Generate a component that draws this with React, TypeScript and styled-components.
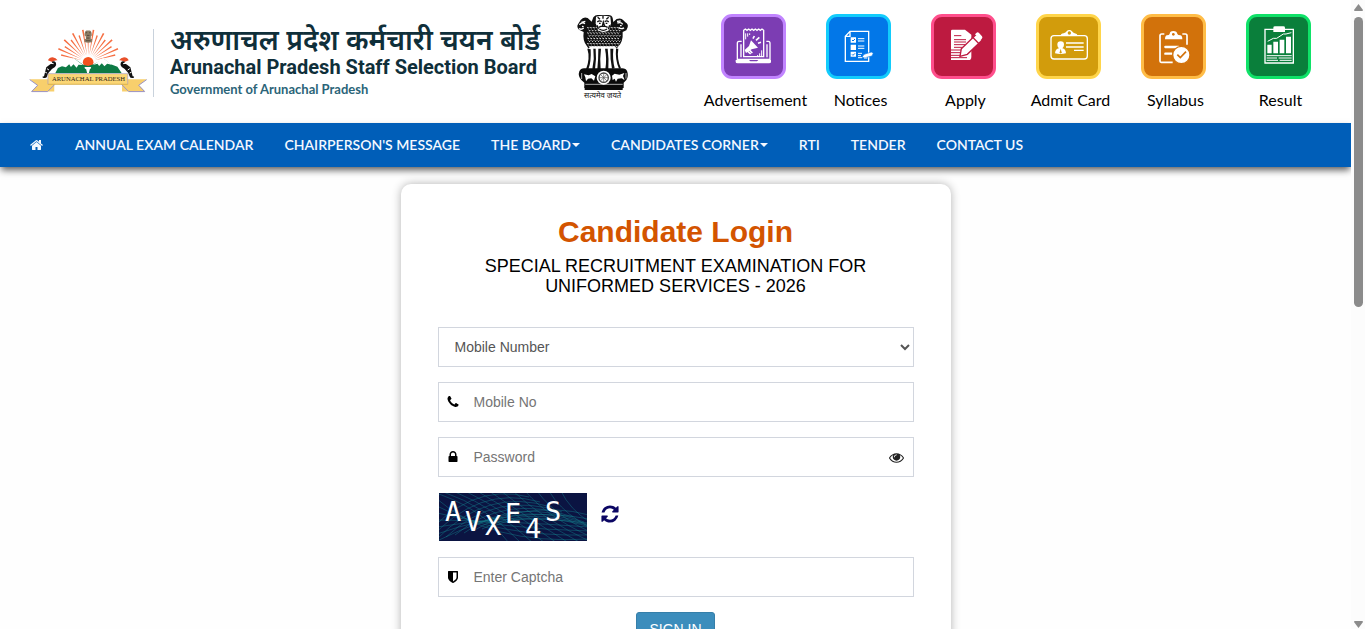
import React from 'react';
import styled, { createGlobalStyle } from 'styled-components';

const GlobalStyle = createGlobalStyle`
  *, *::before, *::after { box-sizing: border-box; }
  body {
    margin: 0;
    background: #fefefe;
    color: #000;
    font-family: "Liberation Sans", Arial, sans-serif;
    font-size: 14px;
  }
`;

/* ---------- page frame ---------- */

const Frame = styled.div`
  display: grid;
  grid-template-columns: minmax(0, 1fr) 14px;
  height: 100vh;
`;

const Viewport = styled.div`
  overflow-x: hidden;
  overflow-y: auto;
  scrollbar-width: none;
`;

const Scrollbar = styled.div`
  display: flex;
  flex-direction: column;
  align-items: center;
  padding: 4px 0 1px;
  background: #fcfcfc;
`;

const ScrollArrow = styled.svg`
  display: block;
  width: 9px;
  height: 7px;
  fill: #8b8b8b;
`;

const ScrollTrack = styled.div`
  flex: 1;
  padding-top: 6px;
`;

const ScrollThumb = styled.div`
  width: 9px;
  height: 48%;
  border-radius: 5px;
  background: #8b8b8b;
`;

/* ---------- header ---------- */

const Header = styled.header`
  display: flex;
  justify-content: space-between;
  padding: 14px 18px 0 28px;
  height: 123px;
  background: #fff;
`;

const Brand = styled.a`
  display: flex;
  align-items: flex-start;
  color: #0f2f3a;
  text-decoration: none;
`;

const StateLogo = styled.svg`
  width: 121px;
  height: 66px;
  margin-top: 14px;
  margin-right: 4px;
`;

const BrandText = styled.div`
  display: flex;
  flex-direction: column;
  min-width: 390px;
  height: 68px;
  margin-top: 15px;
  margin-right: 31px;
  padding-left: 16px;
  border-left: 1px solid #c9d2dc;
  white-space: nowrap;
`;

const HindiName = styled.span`
  height: 28px;
  line-height: 20px;
  font-family: "Noto Sans", sans-serif;
  font-size: 28px;
  font-weight: 600;
`;

const EnglishName = styled.span`
  height: 24px;
  line-height: 20px;
  font-family: Roboto, sans-serif;
  font-size: 20px;
  font-weight: 700;
`;

const GovName = styled.span`
  line-height: 16px;
  font-family: Lato, sans-serif;
  font-size: 13px;
  font-weight: 700;
  color: #2b6478;
`;

const Emblem = styled.svg`
  width: 57px;
  height: 86px;
`;

const QuickLinks = styled.nav`
  display: grid;
  grid-template-columns: repeat(6, 105px);
`;

const QuickLink = styled.a`
  display: flex;
  flex-direction: column;
  align-items: center;
  color: #000;
  font-family: Lato, sans-serif;
  font-size: 16px;
  line-height: 20px;
  text-decoration: none;
  white-space: nowrap;
`;

const Tile = styled.span<{ $fill: string; $edge: string }>`
  display: block;
  width: 65px;
  height: 65px;
  margin: 0 4px 11px 0;
  border: 3px solid ${(p) => p.$edge};
  border-radius: 11px;
  background: ${(p) => p.$fill};
`;

const TileArt = styled.svg`
  display: block;
  width: 59px;
  height: 59px;
`;

/* ---------- navigation ---------- */

const NavBar = styled.nav`
  position: relative;
  height: 44px;
  background: #005eb8;
  box-shadow: 0 4px 7px -1px rgba(0, 0, 0, 0.65);
`;

const NavList = styled.ul`
  display: flex;
  margin: 0;
  padding: 0 15px;
  list-style: none;
`;

const NavLink = styled.a`
  display: flex;
  align-items: center;
  gap: 1px;
  height: 43px;
  padding: 0 16px 0 15px;
  color: #f3f8ff;
  font-family: Lato, sans-serif;
  font-size: 14px;
  font-weight: 600;
  text-decoration: none;
  white-space: nowrap;
`;

const Caret = styled.span`
  border-top: 4px solid currentColor;
  border-right: 4px solid transparent;
  border-left: 4px solid transparent;
`;

const Glyph = styled.svg<{ $size: number }>`
  display: block;
  flex: none;
  width: ${(p) => p.$size}px;
  height: ${(p) => p.$size}px;
  fill: currentColor;
`;

/* ---------- login card ---------- */

const Main = styled.main`
  display: flex;
  justify-content: center;
  padding: 17px 16px 40px;
`;

const Card = styled.form`
  display: flex;
  flex-direction: column;
  gap: 15px;
  width: 100%;
  max-width: 550px;
  padding: 30px 37px;
  border-radius: 10px;
  background: #fff;
  box-shadow: 0 0 10px rgba(0, 0, 0, 0.3);
`;

const Heading = styled.div`
  margin-bottom: 16px;
  text-align: center;
`;

const Title = styled.h1`
  margin: 0 0 6px;
  color: #d35400;
  font-size: 30px;
  line-height: 36px;
`;

const Subtitle = styled.h2`
  margin: 0;
  font-size: 18px;
  font-weight: 400;
  line-height: 20px;
`;

const Select = styled.select`
  width: 100%;
  height: 40px;
  padding: 6px 12px;
  border: 1px solid #d2d6de;
  border-radius: 0;
  background-color: #fff;
  color: #555;
  font: inherit;
`;

const Field = styled.label`
  display: flex;
  align-items: center;
  height: 40px;
  padding: 0 9px 0 7px;
  border: 1px solid #d2d6de;
  background: #fff;
`;

const FieldInput = styled.input`
  flex: 1;
  min-width: 0;
  margin-left: 14px;
  padding: 0;
  border: 0;
  outline: 0;
  background: none;
  color: #555;
  font: inherit;

  &::placeholder { color: #757575; }
`;

const IconButton = styled.button<{ $color: string }>`
  padding: 0;
  border: 0;
  background: none;
  color: ${(p) => p.$color};
  cursor: pointer;
`;

const CaptchaRow = styled.div`
  display: flex;
  align-items: center;
  gap: 13px;
  height: 50px;
  padding-left: 1px;

  ${IconButton} { margin-bottom: 7px; }
`;

const CaptchaArt = styled.svg`
  display: block;
  width: 148px;
  height: 48px;
  background: #0b1442;
  font-family: "DejaVu Sans Mono", monospace;
  font-size: 27px;
`;

const SignIn = styled.button`
  align-self: center;
  height: 34px;
  padding: 6px 12px;
  border: 1px solid #367fa9;
  border-radius: 3px;
  background: #3c8dbc;
  color: #fff;
  font: inherit;
`;

/* ---------- glyph data ---------- */

const glyphs = {
  home: 'M1408 992v480q0 26-19 45t-45 19h-384v-384h-256v384h-384q-26 0-45-19t-19-45v-480q0-1 .5-3t.5-3l575-474 575 474q1 2 1 6zm223-69l-62 74q-8 9-21 11h-3q-13 0-21-7l-692-577-692 577q-12 8-24 7-13-2-21-11l-62-74q-8-10-7-23.5t11-21.5l719-599q32-26 76-26t76 26l244 204v-195q0-14 9-23t23-9h192q14 0 23 9t9 23v408l219 182q10 8 11 21.5t-7 23.5z',
  phone: 'M1600 1240q0 27-10 70.5t-21 68.5q-21 50-122 106-94 51-186 51-27 0-53-3.5t-57.5-12.5-47-14.5-55.5-20.5-49-18q-98-35-175-83-127-79-264-216t-216-264q-48-77-83-175-3-9-18-49t-20.5-55.5-14.5-47-12.5-57.5-3.5-53q0-92 51-186 56-101 106-122 25-11 68.5-21t70.5-10q14 0 21 3 18 6 53 76 11 19 30 54t35 63.5 31 53.5q3 4 17.5 25t21.5 35.5 7 28.5q0 20-28.5 50t-62 55-62 53-28.5 46q0 9 5 22.5t8.5 20.5 14 24 11.5 19q76 137 174 235t235 174q2 1 19 11.5t24 14 20.5 8.5 22.5 5q18 0 46-28.5t53-62 55-62 50-28.5q14 0 28.5 7t35.5 21.5 25 17.5q25 15 53.5 31t63.5 35 54 30q70 35 76 53 3 7 3 21z',
  lock: 'M640 768h512v-192q0-106-75-181t-181-75-181 75-75 181v192zm832 96v576q0 40-28 68t-68 28h-960q-40 0-68-28t-28-68v-576q0-40 28-68t68-28h32v-192q0-184 132-316t316-132 316 132 132 316v192h32q40 0 68 28t28 68z',
  shield: 'M1344 960v-640h-448v1137q119-63 213-137 235-184 235-360zm192-768v768q0 86-33.5 170.5t-83 150-118 127.5-126.5 103-121 77.5-89.5 49.5-42.5 20q-12 6-26 6t-26-6q-16-7-42.5-20t-89.5-49.5-121-77.5-126.5-103-118-127.5-83-150-33.5-170.5v-768q0-26 19-45t45-19h1152q26 0 45 19t19 45z',
  eye: 'M1664 960q-152-236-381-353 61 104 61 225 0 185-131.5 316.5t-316.5 131.5-316.5-131.5-131.5-316.5q0-121 61-225-229 117-381 353 133 205 333.5 326.5t434.5 121.5 434.5-121.5 333.5-326.5zm-720-384q0-20-14-34t-34-14q-125 0-214.5 89.5t-89.5 214.5q0 20 14 34t34 14 34-14 14-34q0-86 61-147t147-61q20 0 34-14t14-34zm848 384q0 34-20 69-140 230-376.5 368.5t-499.5 138.5-499.5-139-376.5-368q-20-35-20-69t20-69q140-229 376.5-368t499.5-139 499.5 139 376.5 368q20 35 20 69z',
  refresh: 'M1639 1056q0 5-1 7-64 268-268 434.5t-478 166.5q-146 0-282.5-55t-243.5-157l-129 129q-19 19-45 19t-45-19-19-45v-448q0-26 19-45t45-19h448q26 0 45 19t19 45-19 45l-137 137q71 66 161 102t187 36q134 0 250-65t186-179q11-17 53-117 8-23 30-23h192q13 0 22.5 9.5t9.5 22.5zm25-800v448q0 26-19 45t-45 19h-448q-26 0-45-19t-19-45 19-45l138-138q-148-137-349-137-134 0-250 65t-186 179q-11 17-53 117-8 23-30 23h-199q-13 0-22.5-9.5t-9.5-22.5v-7q65-268 270-434.5t480-166.5q146 0 284 55.5t245 156.5l130-129q19-19 45-19t45 19 19 45z',
};

const Icon = ({ name, size }: { name: keyof typeof glyphs; size: number }) => (
  <Glyph $size={size} viewBox="0 0 1792 1792" aria-hidden="true">
    <path d={glyphs[name]} />
  </Glyph>
);

/* ---------- drawings ---------- */

const rays = Array.from({ length: 17 }, (_, i) => {
  const angle = Math.PI * (0.08 + (i * 0.84) / 16);
  const outer = i % 2 ? 98 : 84;
  const at = (r: number, a: number) => `${205 - r * Math.cos(a)} ${156 - r * Math.sin(a)}`;
  return `M${at(20, angle)}L${at(outer, angle - 0.026)}L${at(outer, angle + 0.026)}Z`;
}).join('');

const Hornbill = () => (
  <g>
    <path d="M84 151q4-9 14-9 10 1 15 9-9-1-16 5z" fill="#e8502a" />
    <path d="M96 155q8-3 12 3 3 8-3 13l-9 6-10 11-6 14-6 2-6 0 4-4 4-16 3-12 10-8 8-5z" fill="#111" />
    <path d="M92 160l9 1M81 176l6 4M76 187l5 2" stroke="#fff" strokeWidth="3" fill="none" />
    <path d="M68 201l11 0" stroke="#111" strokeWidth="3" />
  </g>
);

const StateLogoArt = () => (
  <StateLogo viewBox="24 54 364 198" role="img" aria-label="Arunachal Pradesh state emblem">
    <path d={rays} fill="#f66f43" />
    <circle cx="205" cy="157" r="16" fill="#f4511e" />
    <path d="M194 76q0-14 6-15h10q6 1 6 15l-3 3v8h4v9q-12 4-23 0v-9h4v-8z" fill="#8d7c64" />
    <path d="M198 68h4M208 68h4M201 76h8M200 84h9M198 92h14" stroke="#40342a" strokeWidth="2" />
    <path d="M106 190l8-16 22-10 28-18 26 18 15 4 16-5 32-16 18 15 22 8 13 20z" fill="#0d7a45" />
    <path d="M124 168l38-23 27 20-13-1-6 9-9-10-8 8-5-8-10 9z M220 165l30-21 26 20-14-3-8 8-8-9-8 8-5-7z" fill="#fff" />
    <path d="M194 171h20q0 6-4 7l-3 12h-5l-3-12q-5-2-5-7z" fill="#fff" />
    <Hornbill />
    <g transform="translate(411 0) scale(-1 1)"><Hornbill /></g>
    <path d="M29 208h74v37H34l18-19z M381 208h-74v37h69l-18-19z" fill="#f8cf6c" />
    <path d="M29 209l24 17-18 19h48l22-22M381 209l-24 17 18 19h-48l-22-22" fill="none" stroke="#9a93c4" strokeWidth="3" />
    <path d="M84 191h240v33H84z" fill="#fbd675" />
    <path d="M84 223V191h240v32" fill="none" stroke="#a79cc6" strokeWidth="2" />
    <path d="M84 223h240" stroke="#c99f35" strokeWidth="2" />
    <text x="206" y="214" textAnchor="middle" fontFamily="Liberation Serif, serif" fontSize="20" fill="#2e2415">
      ARUNACHAL PRADESH
    </text>
  </StateLogo>
);

const maneRows = Array.from({ length: 9 }, (_, r) =>
  Array.from({ length: 11 }, (_, c) => `M${70 + c * 9 + (r % 2) * 4} ${66 + r * 8}q3 5 5 0`).join(''),
).join('');

const EmblemArt = () => (
  <Emblem viewBox="30 26 171 258" role="img" aria-label="State Emblem of India">
    <path d="M88 36q6-8 15-7h30q11 0 13 9l2 12 10-9q14-5 20 4l6 6q10 6 7 15l-4 9-11 5q2 30-14 44l-5 8H75l-6-9q-14-16-10-43l-14-7q-8-8-3-16l8-13q8-11 21-6l12 11z" fill="#111" />
    <path d={maneRows} fill="none" stroke="#fff" strokeWidth="3" />
    <path d="M96 34q22-5 43 0l2 20-6 20q-17 12-33 0l-7-20z" fill="#fff" />
    <path d="M101 36l7 6M134 36l-7 6M117 31v9M100 50q6-6 13-1M122 49q7-5 12 1M105 54h5M125 54h5M118 50l-3 13h7z M104 66q13-7 27 0M106 71q12 8 23 0M99 60l4 12M137 60l-4 12" fill="none" stroke="#111" strokeWidth="4" />
    <path d="M46 58q8-9 17-3M45 70q8 4 14-2M52 51l12-3M160 53q12-4 16 4M164 67q9 6 16 0M159 48l11-1M54 63l5 1M168 61h5" fill="none" stroke="#fff" strokeWidth="4" />
    <path d="M73 132l6-9 74 0 6 9-2 27 7 20-9 15-75-1-10-13 6-22z" fill="#fff" />
    <path d="M70 130q9 28-4 62h7q9-22 7-60z M88 130q4 30-3 60l8 2q5-30 2-62z M103 130q0 32-3 62h10q-3-30 1-62z M123 130q6 30 1 62h9q2-32-2-62z M139 130q-1 32 5 60l8-1q-7-28-4-59z M156 130q-3 34 9 60l6-1q-13-28-8-59z" fill="#111" />
    <path d="M46 198q4-9 14-9h114q12 0 16 10 4 14-3 25l-8 8v16q-62 10-118 0v-16l-9-8q-11-12-6-26z" fill="#0b0b0b" />
    <path d="M60 207l14 3 9-4 11 7-4 13-8-7-10 1-6 8-2-12z M144 211l8-6 14 3 15-5-4 9 5 12-9-5-12 1-5 9-4-9-6 4z" fill="#fff" />
    <path d="M53 203v18M186 203v17M64 237h112" stroke="#fff" strokeWidth="2" />
    <circle cx="119" cy="217" r="21" fill="#fff" />
    <circle cx="119" cy="217" r="14" fill="none" stroke="#444" strokeWidth="4" />
    <path d="M119 203v28M105 217h28M109 207l20 20M129 207l-20 20" stroke="#555" strokeWidth="2" />
    <path d="M62 243h114v11H62z" fill="#0b0b0b" />
    <text x="116" y="279" textAnchor="middle" fontFamily="Noto Sans, sans-serif" fontSize="23" fill="#111">
      सत्यमेव जयते
    </text>
  </Emblem>
);

const AdvertisementArt = () => (
  <g fill="none" stroke="#fff" strokeWidth="4">
    <path d="M68 128V49l5-4 5 4 5-4 5 4 5-4 5 4 5-4 5 4 5-4 5 4 5-4 5 4v79z" />
    <path d="M62 82h-8q-5 0-5 6v48h98V88q0-6-5-6h-6M60 130V91M138 130V91" />
    <path d="M44 138h40l4 4h20l4-4h38v6q0 4-6 4H50q-6 0-6-4z" fill="#fff" stroke="none" />
    <path d="M74 58v18M80 58v10M86 58v5M116 128v-10M122 128v-19M110 128v-5" strokeWidth="3" />
    <path d="M90 79l21 22-19 5-17 11-4-9 13-12z" fill="#fff" stroke="none" />
    <path d="M79 111l10 9M84 107l10 10M96 74l4-8M105 79l10-9M111 88l9-3" strokeWidth="5" />
  </g>
);

const NoticesArt = () => (
  <g fill="none" stroke="#fff" strokeWidth="4">
    <path d="M72 52h56v90H58V67z M58 67h14V52" />
    <path d="M74 70h16v16H74z M74 92h16v16H74z M74 113h16v15H74z" fill="#fff" stroke="none" />
    <path d="M78 78l3 3 6-6M78 121l3 3 6-6" stroke="#0277e8" strokeWidth="3" />
    <path d="M96 74h19M96 81h19M96 96h19M96 103h19M96 118h12M96 125h9" strokeWidth="3" />
    <path d="M107 131l7-10 22-7 6 4-4 8-20 5z" fill="#fff" stroke="#0277e8" strokeWidth="2" />
    <path d="M96 131h12M114 132h10" strokeWidth="3" />
  </g>
);

const ApplyArt = () => (
  <g>
    <path d="M64 47h38l19 15v66q0 10-8 10H60V51q0-4 4-4z" fill="#fff" />
    <path d="M69 65h22M69 77h36M69 84h36M69 92h33M69 100h26M60 108h34M60 116h28M60 124h28M60 131h48" stroke="#bd1a40" strokeWidth="3" />
    <path d="M91 104l42-40q4-3 8 1l9 10q3 4 0 7l-41 39-22 6z" fill="#fff" stroke="#bd1a40" strokeWidth="4" />
    <path d="M125 70l19 19" stroke="#bd1a40" strokeWidth="4" />
    <path d="M136 57q4-4 8 0l9 10q3 4-1 8l-4 4-16-18z" fill="#fff" />
  </g>
);

const AdmitCardArt = () => (
  <g fill="none" stroke="#fff" strokeWidth="4">
    <rect x="45" y="65" width="109" height="70" rx="9" />
    <path d="M74 65q0-6 9-7 6-1 9-6 3-4 8-4t8 4q3 5 8 6 8 1 9 7z" fill="#fff" stroke="none" />
    <circle cx="100" cy="57" r="5" fill="#d29c0c" stroke="none" />
    <path d="M74 82q10 0 10 10 0 6-5 11 10 2 11 15-17 4-33 0 1-13 12-15-5-5-5-11 0-10 10-10z" fill="#fff" stroke="none" />
    <path d="M74 104l-3 11 3 4 3-4z" fill="#d29c0c" stroke="none" />
    <path d="M90 87h53M90 99h53M114 109h29" strokeWidth="4" />
  </g>
);

const SyllabusArt = () => (
  <g fill="none" stroke="#fff" strokeWidth="5">
    <path d="M70 60h-8q-5 0-5 5v76q0 4 4 4h34M124 60h9q5 0 5 5v27" />
    <path d="M86 60q0-9 11-9t12 9q2 4 9 4 6 1 6 12H72q0-11 6-12 6 0 8-4z" fill="#fff" stroke="none" />
    <circle cx="97" cy="61" r="4" fill="#d2720b" stroke="none" />
    <path d="M73 99h39M73 119h19" strokeWidth="7" strokeLinecap="round" />
    <circle cx="121" cy="123" r="26" fill="#fff" stroke="#d2720b" strokeWidth="4" />
    <path d="M109 122l9 9 17-18" stroke="#d2720b" strokeWidth="5" />
  </g>
);

const ResultArt = () => (
  <g fill="none" stroke="#fff" strokeWidth="4">
    <path d="M57 46h85v101H57z" />
    <path d="M82 41q0-4 5-4h25q5 0 5 4v13H82z" fill="#fff" stroke="none" />
    <path d="M64 92h13v26H64z M82 83h14v35H82z M101 77h14v41h-14z M120 68h15v50h-15z" fill="#fff" stroke="none" />
    <path d="M65 82l17-9h10l20-13h8l16-4" strokeWidth="3" />
    <path d="M62 125h75M62 132h31M98 132h39M62 139h34M101 139h36" strokeWidth="3" />
  </g>
);

const quickLinks = [
  { label: 'Advertisement', fill: '#7c3db3', edge: '#c184ff', art: <AdvertisementArt /> },
  { label: 'Notices', fill: '#0277e8', edge: '#12ccfc', art: <NoticesArt /> },
  { label: 'Apply', fill: '#bd1a40', edge: '#ff4f8c', art: <ApplyArt /> },
  { label: 'Admit Card', fill: '#d29c0c', edge: '#ffd54a', art: <AdmitCardArt /> },
  { label: 'Syllabus', fill: '#d2720b', edge: '#ffbd47', art: <SyllabusArt /> },
  { label: 'Result', fill: '#0a7f3b', edge: '#0fe268', art: <ResultArt /> },
];

const navItems = [
  { label: 'ANNUAL EXAM CALENDAR' },
  { label: "CHAIRPERSON'S MESSAGE" },
  { label: 'THE BOARD', menu: true },
  { label: 'CANDIDATES CORNER', menu: true },
  { label: 'RTI' },
  { label: 'TENDER' },
  { label: 'CONTACT US' },
];

const captchaLetters = [
  { char: 'A', x: 6, y: 28 },
  { char: 'V', x: 26, y: 38 },
  { char: 'X', x: 46, y: 42 },
  { char: 'E', x: 66, y: 30 },
  { char: '4', x: 86, y: 45 },
  { char: 'S', x: 106, y: 28 },
];

const captchaThreads = [
  ...Array.from({ length: 9 }, (_, i) => `M${-20 + i * 9} ${50 - i * 2}Q${30 + i * 9} ${-12 + i * 3} ${90 + i * 11} ${4 + i * 5}`),
  ...Array.from({ length: 12 }, (_, i) => `M${i * 12 - 10} -2Q${40 + i * 9} ${12 + i * 2} ${70 + i * 12} 50`),
  ...Array.from({ length: 7 }, (_, i) => `M-2 ${6 + i * 7}Q${50 + i * 6} ${52 - i * 8} 150 ${46 - i * 4}`),
].join('');

export default function App() {
  const [showPassword, setShowPassword] = React.useState(false);

  return (
    <Frame>
      <GlobalStyle />
      <Viewport>
        <Header>
          <Brand href="#home">
            <StateLogoArt />
            <BrandText>
              <HindiName lang="hi">अरुणाचल प्रदेश कर्मचारी चयन बोर्ड</HindiName>
              <EnglishName>Arunachal Pradesh Staff Selection Board</EnglishName>
              <GovName>Government of Arunachal Pradesh</GovName>
            </BrandText>
            <EmblemArt />
          </Brand>
          <QuickLinks aria-label="Quick links">
            {quickLinks.map((link) => (
              <QuickLink key={link.label} href="#quick">
                <Tile $fill={link.fill} $edge={link.edge}>
                  <TileArt viewBox="9 9 177 177" aria-hidden="true">{link.art}</TileArt>
                </Tile>
                {link.label}
              </QuickLink>
            ))}
          </QuickLinks>
        </Header>

        <NavBar aria-label="Main">
          <NavList>
            <li>
              <NavLink href="#home" aria-label="Home"><Icon name="home" size={14} /></NavLink>
            </li>
            {navItems.map((item) => (
              <li key={item.label}>
                <NavLink href="#section">
                  {item.label}
                  {item.menu && <Caret />}
                </NavLink>
              </li>
            ))}
          </NavList>
        </NavBar>

        <Main>
          <Card onSubmit={(e) => e.preventDefault()}>
            <Heading>
              <Title>Candidate Login</Title>
              <Subtitle>SPECIAL RECRUITMENT EXAMINATION FOR UNIFORMED SERVICES - 2026</Subtitle>
            </Heading>
            <Select aria-label="Login with" defaultValue="mobile">
              <option value="mobile">Mobile Number</option>
              <option value="registration">Registration Number</option>
            </Select>
            <Field>
              <Icon name="phone" size={14} />
              <FieldInput type="text" placeholder="Mobile No" aria-label="Mobile No" />
            </Field>
            <Field>
              <Icon name="lock" size={14} />
              <FieldInput type={showPassword ? 'text' : 'password'} placeholder="Password" aria-label="Password" />
              <IconButton type="button" $color="#222" aria-label="Show password" onClick={() => setShowPassword(!showPassword)}>
                <Icon name="eye" size={15} />
              </IconButton>
            </Field>
            <CaptchaRow>
              <CaptchaArt viewBox="0 0 148 48" role="img" aria-label="Captcha">
                <path d={captchaThreads} fill="none" stroke="#14808c" strokeWidth="1" opacity="0.45" />
                {captchaLetters.map((l) => (
                  <text key={l.char} x={l.x} y={l.y} fill="#fff">{l.char}</text>
                ))}
              </CaptchaArt>
              <IconButton type="button" $color="#0b0663" aria-label="Refresh captcha">
                <Icon name="refresh" size={20} />
              </IconButton>
            </CaptchaRow>
            <Field>
              <Icon name="shield" size={14} />
              <FieldInput type="text" placeholder="Enter Captcha" aria-label="Enter Captcha" />
            </Field>
            <SignIn type="submit">SIGN IN</SignIn>
          </Card>
        </Main>
      </Viewport>
      <Scrollbar aria-hidden="true">
        <ScrollArrow viewBox="0 0 9 7"><path d="M4.500 0L9 6Q9 7 8 7H1Q0 7 0 6z" /></ScrollArrow>
        <ScrollTrack><ScrollThumb /></ScrollTrack>
        <ScrollArrow viewBox="0 0 9 7"><path d="M4.500 7L9 1Q9 0 8 0H1Q0 0 0 1z" /></ScrollArrow>
      </Scrollbar>
    </Frame>
  );
}
